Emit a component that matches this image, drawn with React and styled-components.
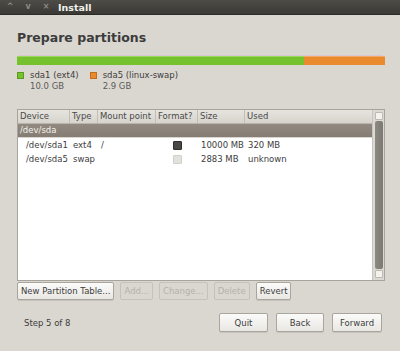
import React from "react";
import styled, { createGlobalStyle } from "styled-components";

const Global = createGlobalStyle`
  html, body { margin: 0; padding: 0; }
  body {
    width: 400px;
    height: 351px;
    overflow: hidden;
    background: #dad7d0;
    font-family: "DejaVu Sans", "Liberation Sans", sans-serif;
    font-size: 8.5px;
    color: #3c3c3c;
  }
`;

const Window = styled.div`
  width: 400px;
  height: 351px;
  display: flex;
  flex-direction: column;
  background: #dad7d0;
`;

const TitleBar = styled.div`
  height: 14px;
  background: linear-gradient(#4d4c47, #3a3935);
  border-bottom: 1px solid #2c2b28;
  display: flex;
  align-items: center;
  padding-left: 1px;
`;

const TitleBtn = styled.span`
  width: 18px;
  text-align: center;
  color: #8d8b85;
  font-size: 8px;
  font-weight: bold;
  line-height: 14px;
`;

const Title = styled.span`
  margin-left: 3px;
  color: #f2f1ed;
  font-weight: bold;
  font-size: 9.5px;
`;

const Content = styled.div`
  flex: 1;
  display: flex;
  flex-direction: column;
  padding: 15px 15px 0 17px;
`;

const Heading = styled.h1`
  margin: 0;
  font-size: 12.5px;
  font-weight: bold;
  color: #3c3c3c;
  height: 16px;
`;

const Bar = styled.div`
  margin-top: 10px;
  height: 9px;
  display: flex;
  box-shadow: 0 -3px 0 -2px #d6c8d3;
`;

const Segment = styled.div`
  flex: ${(p) => p.$w};
  background: ${(p) => p.$c};
  border-top: 1px solid ${(p) => p.$hi};
`;

const Legend = styled.div`
  display: flex;
  gap: 11px;
  margin-top: 5px;
`;

const LegendItem = styled.div`
  display: grid;
  grid-template-columns: 8px auto;
  column-gap: 5px;
  line-height: 11px;
`;

const Swatch = styled.span`
  width: 7px;
  height: 7px;
  margin-top: 2px;
  background: ${(p) => p.$c};
  border: 1px solid ${(p) => p.$b};
  box-sizing: border-box;
`;

const Size = styled.span`
  grid-column: 2;
  color: #5a5a5a;
`;

const Table = styled.div`
  margin-top: 17px;
  height: 172px;
  border: 1px solid #a7a49d;
  background: #fff;
  display: flex;
  box-sizing: border-box;
  width: 368px;
`;

const Rows = styled.div`
  flex: 1;
`;

const cols = "52px 28px 58px 42px 47px 1fr";

const HeaderRow = styled.div`
  display: grid;
  grid-template-columns: ${cols};
  height: 13px;
  line-height: 13px;
  background: linear-gradient(#e6e4df, #d7d4cd);
  border-bottom: 1px solid #b9b5ad;
`;

const HeadCell = styled.div`
  padding-left: 2px;
  border-right: 1px solid #c2beb6;
  color: #4a4a4a;
  white-space: nowrap;
  overflow: hidden;
  &:last-child { border-right: none; }
`;

const DiskRow = styled.div`
  height: 13px;
  line-height: 13px;
  background: linear-gradient(#928a80, #857d73);
  color: #f4f2ee;
  padding-left: 2px;
  border-bottom: 1px solid #d9d6d0;
`;

const Row = styled.div`
  display: grid;
  grid-template-columns: ${cols};
  height: 14px;
  line-height: 14px;
  color: #3c3c3c;
`;

const Cell = styled.div`
  padding-left: ${(p) => (p.$indent ? "8px" : "3px")};
  white-space: nowrap;
  overflow: hidden;
  display: ${(p) => (p.$center ? "flex" : "block")};
  justify-content: center;
  align-items: center;
`;

const Check = styled.span`
  width: 7px;
  height: 7px;
  margin-right: 2px;
  border-radius: 1px;
  background: ${(p) => (p.$on ? "#4a4845" : "#e3e1dd")};
  border: 1px solid ${(p) => (p.$on ? "#2e2d2b" : "#d3d0cb")};
`;

const Scrollbar = styled.div`
  width: 12px;
  border-left: 1px solid #c9c5be;
  background: #dcd9d3;
  display: flex;
  flex-direction: column;
  align-items: center;
  padding: 2px 0;
  box-sizing: border-box;
`;

const ScrollArrow = styled.div`
  width: 6px;
  height: 6px;
  border: 1px solid #bdb9b2;
  background: #f3f2ef;
  border-radius: 1px;
`;

const Thumb = styled.div`
  flex: 1;
  width: 8px;
  margin: 1px 0;
  background: linear-gradient(90deg, #8d8983, #7c7872);
  border-radius: 2px;
`;

const ButtonRow = styled.div`
  display: flex;
  gap: 6px;
  margin-top: 1px;
`;

const Button = styled.button`
  font-family: inherit;
  font-size: 8.5px;
  height: 18px;
  padding: 0 3px;
  min-width: ${(p) => p.$min || 0}px;
  border: 1px solid ${(p) => (p.disabled ? "#c5c2bb" : "#a9a59d")};
  border-radius: 2px;
  background: ${(p) =>
    p.disabled ? "#dad7d0" : "linear-gradient(#fbfbfa, #e9e7e3)"};
  color: ${(p) => (p.disabled ? "#b4b1ab" : "#3c3c3c")};
  box-shadow: ${(p) => (p.disabled ? "none" : "0 1px 0 #c6c3bc")};
  white-space: nowrap;
  cursor: default;
`;

const FooterButton = styled(Button)`
  height: 19px;
`;

const Footer = styled.div`
  display: flex;
  align-items: center;
  margin-top: 13px;
  padding-left: 7px;
  padding-right: 3px;
`;

const Step = styled.span`
  flex: 1;
  color: #3c3c3c;
`;

const FooterButtons = styled.div`
  display: flex;
  gap: 8px;
`;

export default function App() {
  return (
    <Window>
      <Global />
      <TitleBar>
        <TitleBtn>^</TitleBtn>
        <TitleBtn>v</TitleBtn>
        <TitleBtn>×</TitleBtn>
        <Title>Install</Title>
      </TitleBar>
      <Content>
        <Heading>Prepare partitions</Heading>
        <Bar>
          <Segment $w={287} $c="#76c12e" $hi="#9ad85a" />
          <Segment $w={81} $c="#ea8a2f" $hi="#f3a866" />
        </Bar>
        <Legend>
          <LegendItem>
            <Swatch $c="#76c12e" $b="#5a9a22" />
            <span>sda1 (ext4)</span>
            <Size>10.0 GB</Size>
          </LegendItem>
          <LegendItem>
            <Swatch $c="#ea8a2f" $b="#c26c1c" />
            <span>sda5 (linux-swap)</span>
            <Size>2.9 GB</Size>
          </LegendItem>
        </Legend>
        <Table>
          <Rows>
            <HeaderRow>
              <HeadCell>Device</HeadCell>
              <HeadCell>Type</HeadCell>
              <HeadCell>Mount point</HeadCell>
              <HeadCell>Format?</HeadCell>
              <HeadCell>Size</HeadCell>
              <HeadCell>Used</HeadCell>
            </HeaderRow>
            <DiskRow>/dev/sda</DiskRow>
            <Row>
              <Cell $indent>/dev/sda1</Cell>
              <Cell>ext4</Cell>
              <Cell>/</Cell>
              <Cell $center>
                <Check $on />
              </Cell>
              <Cell>10000 MB</Cell>
              <Cell>320 MB</Cell>
            </Row>
            <Row>
              <Cell $indent>/dev/sda5</Cell>
              <Cell>swap</Cell>
              <Cell></Cell>
              <Cell $center>
                <Check />
              </Cell>
              <Cell>2883 MB</Cell>
              <Cell>unknown</Cell>
            </Row>
          </Rows>
          <Scrollbar>
            <ScrollArrow />
            <Thumb />
            <ScrollArrow />
          </Scrollbar>
        </Table>
        <ButtonRow>
          <Button>New Partition Table...</Button>
          <Button disabled>Add...</Button>
          <Button disabled>Change...</Button>
          <Button disabled>Delete</Button>
          <Button>Revert</Button>
        </ButtonRow>
        <Footer>
          <Step>Step 5 of 8</Step>
          <FooterButtons>
            <FooterButton $min={49}>Quit</FooterButton>
            <FooterButton $min={48}>Back</FooterButton>
            <FooterButton $min={50}>Forward</FooterButton>
          </FooterButtons>
        </Footer>
      </Content>
    </Window>
  );
}
